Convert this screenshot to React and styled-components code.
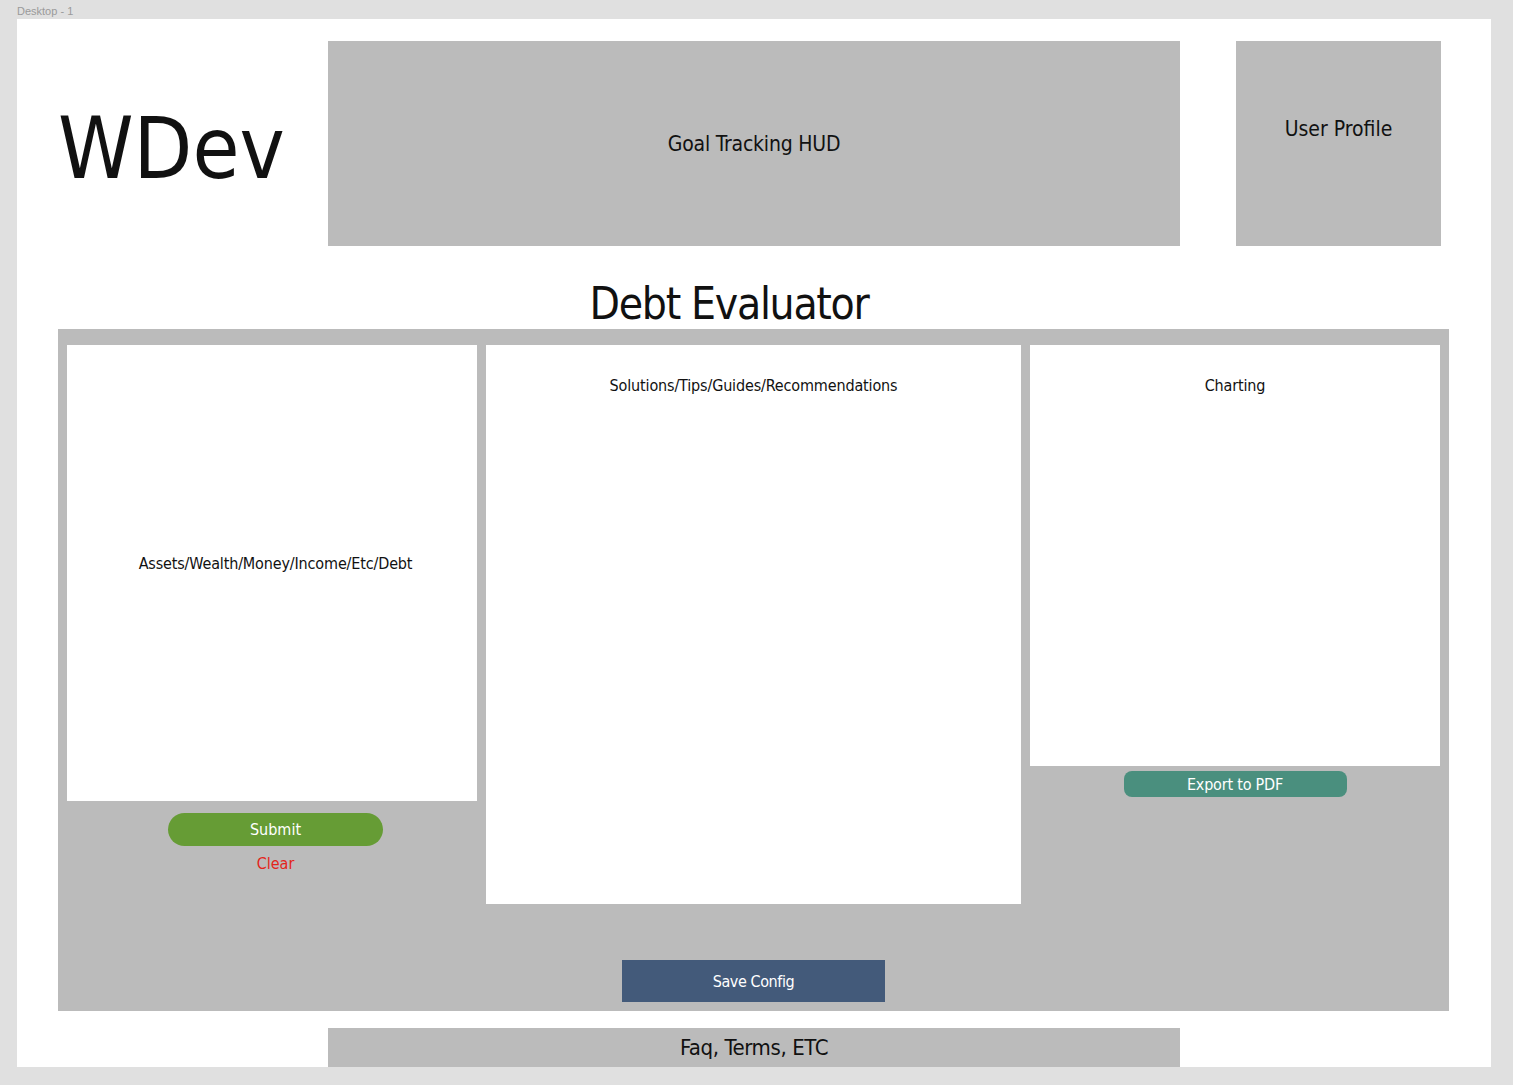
import React from "react";
import styled, { createGlobalStyle } from "styled-components";

const font = `"DejaVu Sans Condensed", "Liberation Sans Narrow", "Liberation Sans", sans-serif`;

const colors = {
  canvas: "#e0e0e0",
  panel: "#bbbbbb",
  white: "#ffffff",
  ink: "#111111",
  green: "#669c35",
  teal: "#4a8f7e",
  navy: "#435a7a",
  red: "#e3261b",
};

const GlobalStyle = createGlobalStyle`
  html, body {
    margin: 0;
    padding: 0;
    background: ${colors.canvas};
    font-family: ${font};
  }
`;

const FrameLabel = styled.div`
  height: 19px;
  padding-left: 17px;
  font-family: "Liberation Sans", sans-serif;
  font-size: 11px;
  line-height: 22px;
  color: #9a9a9a;
`;

const Frame = styled.div`
  margin-left: 17px;
  width: 1474px;
  height: 1048px;
  background: ${colors.white};
  overflow: hidden;
  display: flex;
  flex-direction: column;
  color: ${colors.ink};
`;

const Header = styled.header`
  display: grid;
  grid-template-columns: 214px 852px 205px;
  column-gap: 56px;
  padding: 22px 0 0 41px;
  height: 205px;
`;

const Logo = styled.div`
  display: flex;
  align-items: center;
  font-size: 85px;
  line-height: 1;
  padding-top: 10px;
  white-space: nowrap;
`;

const GrayBox = styled.div`
  background: ${colors.panel};
  display: flex;
  justify-content: center;
  align-items: ${(p) => (p.$top ? "flex-start" : "center")};
  padding-top: ${(p) => (p.$top ? "76px" : "0")};
  font-size: ${(p) => p.$size || 24}px;
  letter-spacing: ${(p) => p.$ls || 0}px;
  box-sizing: border-box;
`;

const Title = styled.h1`
  margin: 0;
  height: 83px;
  display: flex;
  align-items: flex-end;
  justify-content: center;
  padding-right: 50px;
  padding-bottom: 3px;
  box-sizing: border-box;
  font-size: 44px;
  letter-spacing: -1.3px;
  font-weight: normal;
  line-height: 1;
`;

const Panel = styled.section`
  margin-left: 41px;
  width: 1391px;
  height: 682px;
  background: ${colors.panel};
  box-sizing: border-box;
  padding: 16px 8px 9px 9px;
  display: flex;
  flex-direction: column;
`;

const Columns = styled.div`
  display: grid;
  grid-template-columns: 410px 535px 410px;
  column-gap: 9px;
  align-items: start;
  flex: 1;
`;

const Column = styled.div`
  display: flex;
  flex-direction: column;
  align-items: center;
`;

const Card = styled.div`
  width: 100%;
  height: ${(p) => p.$h}px;
  background: ${colors.white};
  display: flex;
  justify-content: center;
  align-items: ${(p) => (p.$center ? "center" : "flex-start")};
  padding-top: ${(p) => (p.$center ? "0" : "31px")};
  padding-bottom: ${(p) => (p.$center ? "20px" : "0")};
  padding-left: ${(p) => (p.$center ? "7px" : "0")};
  box-sizing: border-box;
  font-size: 16px;
  letter-spacing: -0.15px;
`;

const CardActions = styled.div`
  display: flex;
  flex-direction: column;
  align-items: center;
  padding-left: ${(p) => p.$shift || 0}px;
`;

const PillButton = styled.button`
  border: none;
  font-family: ${font};
  color: ${colors.white};
  width: ${(p) => p.$w}px;
  height: ${(p) => p.$h}px;
  margin-top: ${(p) => p.$mt}px;
  border-radius: ${(p) => p.$r}px;
  background: ${(p) => p.$bg};
  font-size: 16px;
  letter-spacing: ${(p) => p.$ls || 0}px;
  padding: 0;
  cursor: pointer;
`;

const ClearLink = styled.button`
  border: none;
  background: none;
  font-family: ${font};
  color: ${colors.red};
  font-size: 16px;
  margin-top: 8px;
  padding: 0;
  cursor: pointer;
`;

const SaveRow = styled.div`
  display: flex;
  justify-content: center;
  padding-right: 1px;
`;

const Footer = styled.footer`
  margin: 17px 0 0 311px;
  width: 852px;
  height: 39px;
  flex-shrink: 0;
  background: ${colors.panel};
  display: flex;
  justify-content: center;
  align-items: center;
  font-size: 22px;
  letter-spacing: -0.4px;
`;

export default function App() {
  return (
    <>
      <GlobalStyle />
      <FrameLabel>Desktop - 1</FrameLabel>
      <Frame>
        <Header>
          <Logo>WDev</Logo>
          <GrayBox $size={21} $ls={-0.2}>Goal Tracking HUD</GrayBox>
          <GrayBox $top $size={21}>User Profile</GrayBox>
        </Header>
        <Title>Debt Evaluator</Title>
        <Panel>
          <Columns>
            <Column>
              <Card $h={456} $center>Assets/Wealth/Money/Income/Etc/Debt</Card>
              <CardActions $shift={7}>
                <PillButton $w={215} $h={33} $mt={12} $r={17} $bg={colors.green}>
                  Submit
                </PillButton>
                <ClearLink>Clear</ClearLink>
              </CardActions>
            </Column>
            <Column>
              <Card $h={559}>Solutions/Tips/Guides/Recommendations</Card>
            </Column>
            <Column>
              <Card $h={421}>Charting</Card>
              <PillButton $w={223} $h={26} $mt={5} $r={8} $bg={colors.teal} $ls={-0.2}>
                Export to PDF
              </PillButton>
            </Column>
          </Columns>
          <SaveRow>
            <PillButton $w={263} $h={42} $mt={0} $r={0} $bg={colors.navy} $ls={-0.4}>
              Save Config
            </PillButton>
          </SaveRow>
        </Panel>
        <Footer>Faq, Terms, ETC</Footer>
      </Frame>
    </>
  );
}
